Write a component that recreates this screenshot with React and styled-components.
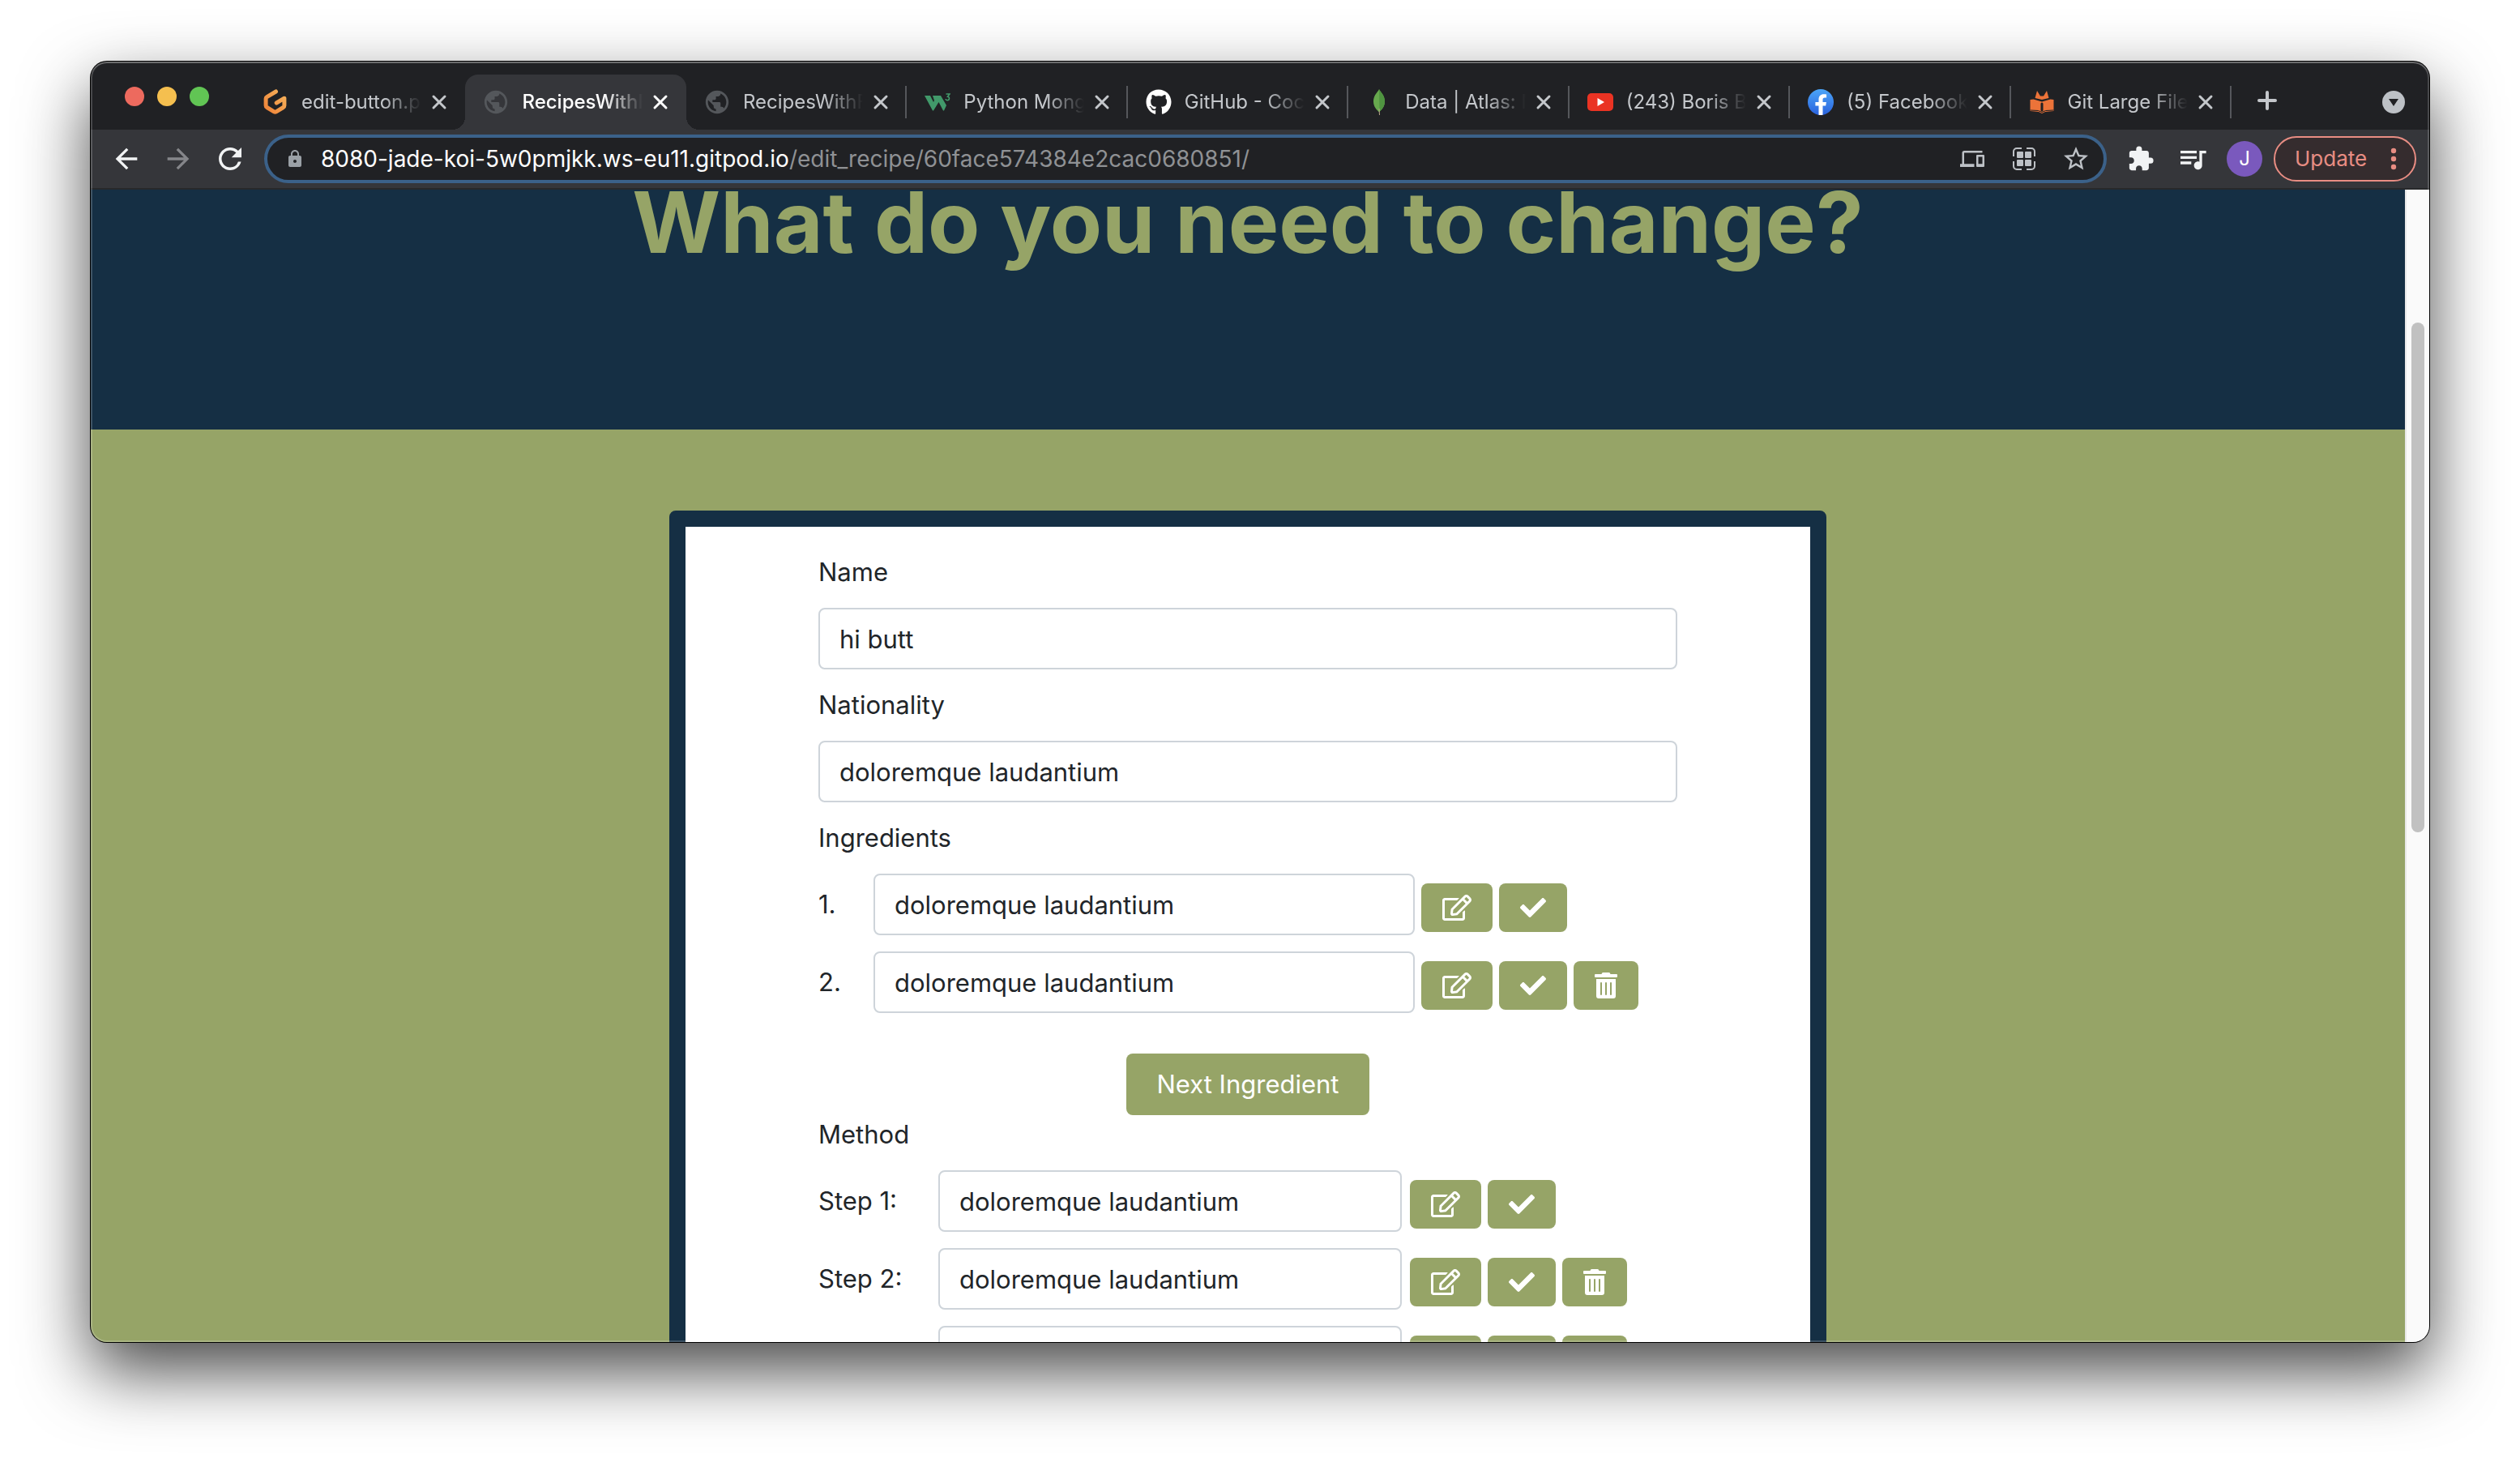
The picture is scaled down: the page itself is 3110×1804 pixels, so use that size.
import React from "react";
import styled, { createGlobalStyle, css } from "styled-components";
import { FaCheck, FaGithub, FaRegEdit, FaTrashAlt } from "react-icons/fa";
import {
  MdArrowBack,
  MdArrowForward,
  MdDevices,
  MdExtension,
  MdLock,
  MdPublic,
  MdQueueMusic,
  MdRefresh,
  MdStarBorder,
} from "react-icons/md";

const navy = "#152f44";
const olive = "#96a467";
const frame = "#202124";
const toolbar = "#35363a";

const GlobalStyle = createGlobalStyle`
  *, *::before, *::after { box-sizing: border-box; }
  body {
    margin: 0;
    background: #fff;
    font-family: Inter, "Liberation Sans", sans-serif;
    font-size: 31px;
    line-height: 48px;
    color: #212529;
  }
  button, input { font: inherit; }
  button { cursor: pointer; }
  svg { display: block; flex: none; }
`;

const Desktop = styled.div`
  height: 100vh;
  padding: 76px 112px 148px;
  display: flex;
`;

const Window = styled.div`
  position: relative;
  flex: 1;
  min-width: 0;
  display: flex;
  flex-direction: column;
  overflow: hidden;
  border-radius: 20px;
  background: ${frame};
  box-shadow: 0 0 0 1px #000, 0 36px 84px rgba(0, 0, 0, 0.72);

  &::after {
    content: "";
    position: absolute;
    inset: 0;
    border-radius: 20px;
    box-shadow: inset 0 0 0 2px rgba(255, 255, 255, 0.18),
      inset 0 2px 0 rgba(255, 255, 255, 0.2);
    pointer-events: none;
  }
`;

/* ---------- tab strip ---------- */

const TabStrip = styled.header`
  height: 84px;
  padding: 16px 30px 0 42px;
  display: flex;
  align-items: center;
`;

const Lights = styled.div`
  width: 148px;
  height: 54px;
  align-self: flex-start;
  display: flex;
  align-items: center;
  gap: 16px;
`;

const Light = styled.button`
  width: 24px;
  height: 24px;
  padding: 0;
  border: 0;
  border-radius: 50%;
  background: ${(p) => p.$color};
`;

const TabList = styled.div`
  flex: 0 1 2452px;
  min-width: 0;
  height: 100%;
  display: flex;
`;

const Tab = styled.div`
  position: relative;
  flex: 1;
  min-width: 0;
  padding: 0 20px 0 22px;
  display: flex;
  align-items: center;
  color: #c4c7cb;

  ${(p) =>
    p.$divider &&
    css`
      &::after {
        content: "";
        position: absolute;
        right: 0;
        top: 14px;
        width: 2px;
        height: 40px;
        background: #55575b;
      }
    `}

  ${(p) =>
    p.$active &&
    css`
      color: #fff;
      background: ${toolbar};
      border-radius: 16px 16px 0 0;

      &::before,
      &::after {
        content: "";
        position: absolute;
        bottom: 0;
        width: 16px;
        height: 16px;
      }
      &::before {
        right: 100%;
        background: radial-gradient(circle at 0 0, transparent 16px, ${toolbar} 16px);
      }
      &::after {
        left: 100%;
        background: radial-gradient(circle at 100% 0, transparent 16px, ${toolbar} 16px);
      }
    `}
`;

const TabTitle = styled.span`
  flex: 1;
  min-width: 0;
  margin: 0 10px 0 16px;
  overflow: hidden;
  white-space: nowrap;
  font-size: 24px;
  line-height: 32px;
  font-weight: ${(p) => (p.$active ? 500 : 400)};
  mask-image: linear-gradient(90deg, #000 68%, transparent 100%);
`;

const PlainButton = styled.button`
  width: ${(p) => p.$width || 24}px;
  height: ${(p) => p.$height || 24}px;
  padding: 0;
  border: 0;
  background: none;
  color: inherit;
  display: flex;
  flex: none;
  align-items: center;
  justify-content: center;
`;

const StripActions = styled.div`
  flex: 1;
  padding-left: 32px;
  display: flex;
  justify-content: space-between;
  color: #c4c7cb;
`;

/* ---------- toolbar ---------- */

const Toolbar = styled.nav`
  height: 74px;
  padding: 0 16px 0 12px;
  border-bottom: 2px solid #28292b;
  background: ${toolbar};
  color: #f1f3f4;
  display: flex;
  align-items: center;
`;

const Omnibox = styled.div`
  flex: 1;
  min-width: 0;
  height: 60px;
  margin: 0 10px;
  padding: 0 2px 0 22px;
  border: 4px solid #3b6189;
  border-radius: 30px;
  background: ${frame};
  color: #bdc1c6;
  display: flex;
  align-items: center;
`;

const Url = styled.div`
  flex: 1;
  min-width: 0;
  margin-left: 20px;
  overflow: hidden;
  white-space: nowrap;
  font-size: 28px;
  line-height: 40px;
  color: #8f9194;
`;

const Host = styled.span`
  color: #fff;
`;

const Avatar = styled.span`
  width: 44px;
  height: 44px;
  border-radius: 50%;
  background: #7a59bd;
  color: #fff;
  font-size: 24px;
  line-height: 44px;
  text-align: center;
`;

const UpdateButton = styled.button`
  height: 56px;
  width: 176px;
  margin-left: 4px;
  padding: 0 22px 0 24px;
  border: 2px solid #e88d83;
  border-radius: 28px;
  background: #352c2e;
  color: #e88d83;
  font-size: 26px;
  line-height: 32px;
  display: flex;
  align-items: center;
  justify-content: space-between;
`;

/* ---------- page ---------- */

const Viewport = styled.div`
  flex: 1;
  min-height: 0;
  display: flex;
`;

const Page = styled.main`
  flex: 1;
  min-width: 0;
  overflow: hidden;
  background: ${olive};
`;

const Hero = styled.section`
  height: 296px;
  overflow: hidden;
  background: ${navy};
  color: ${olive};
  display: flex;
  align-items: flex-end;
  justify-content: center;
`;

const Title = styled.h1`
  margin: 0 0 190px;
  font-size: 105px;
  line-height: 132px;
  font-weight: 700;
  white-space: nowrap;
`;

const Card = styled.form`
  width: 50%;
  margin: 100px auto;
  padding: 32px 164px;
  border: 20px solid ${navy};
  border-radius: 8px;
  background: #fff;
  display: flex;
  flex-direction: column;
`;

const Field = styled.div`
  margin-bottom: 20px;
  display: flex;
  flex-direction: column;
  gap: 20px;
`;

const Label = styled.label`
  display: block;
`;

const Group = styled.fieldset`
  min-width: 0;
  margin: 0;
  padding: 0;
  border: 0;
  display: flex;
  flex-direction: column;
`;

const Legend = styled.legend`
  padding: 0;
  margin-bottom: 20px;
`;

const Row = styled.div`
  margin-bottom: 20px;
  display: flex;
  align-items: center;
`;

const RowLabel = styled.label`
  flex: none;
  width: ${(p) => p.$width}px;
`;

const TextInput = styled.input`
  flex: 1 1 auto;
  width: 100%;
  min-width: 0;
  height: 76px;
  padding: 12px 24px;
  border: 2px solid #ced4da;
  border-radius: 8px;
  background: #fff;
  color: #212529;
  line-height: 48px;
  outline: none;
`;

const RowActions = styled.div`
  flex: none;
  width: ${(p) => p.$width}px;
  height: 60px;
  padding-left: ${(p) => p.$inset}px;
  margin-top: 8px;
  display: flex;
  gap: 8px;
`;

const SolidButton = styled.button`
  border: 0;
  border-radius: 8px;
  background: ${olive};
  color: #fff;
`;

const IconButton = styled(SolidButton)`
  height: 60px;
  padding: 0 26px;
  display: flex;
  align-items: center;

  svg {
    width: ${(p) => p.$icon}px;
    height: 32px;
  }
`;

const NextButton = styled(SolidButton)`
  width: 300px;
  height: 76px;
  margin-top: 30px;
  padding: 0;
  align-self: center;
`;

const ScrollTrack = styled.div`
  width: 30px;
  padding: 164px 6px 0;
  border-left: 2px solid #e8e8e8;
  background: #fafafa;
`;

const ScrollThumb = styled.div`
  width: 16px;
  height: 50%;
  border-radius: 8px;
  background: #c1c1c1;
`;

/* ---------- drawings ---------- */

const Cross = () => (
  <svg width="20" height="20" viewBox="0 0 20 20" stroke="currentColor" strokeWidth="3" strokeLinecap="round">
    <path d="M3 3l14 14M17 3L3 17" />
  </svg>
);

const Plus = () => (
  <svg width="24" height="24" viewBox="0 0 24 24" stroke="currentColor" strokeWidth="4" strokeLinecap="round">
    <path d="M12 2v20M2 12h20" />
  </svg>
);

const SearchTabs = () => (
  <svg width="28" height="28" viewBox="0 0 28 28">
    <circle cx="14" cy="14" r="14" fill="#bdc1c6" />
    <path d="M8 10h12l-6 9z" fill={frame} />
  </svg>
);

const GitpodLogo = () => (
  <svg width="32" height="32" viewBox="0 0 32 32" fill="none">
    <defs>
      <linearGradient id="gitpod" x1="1" y1="0" x2="0" y2="1">
        <stop offset="0" stopColor="#f6b35c" />
        <stop offset="1" stopColor="#ee8238" />
      </linearGradient>
    </defs>
    <path
      d="M16.500 3L5.400 9.600a2.600 2.600 0 0 0-1.300 2.300v8.400c0 .9.5 1.800 1.300 2.200l8.800 5.300c.8.5 1.800.5 2.600 0l8.800-5.300c.8-.4 1.300-1.300 1.300-2.200V11.200l-9.700 5.800"
      stroke="url(#gitpod)"
      strokeWidth="5"
      strokeLinecap="round"
      strokeLinejoin="round"
    />
  </svg>
);

const W3Logo = () => (
  <svg width="32" height="32" viewBox="0 0 32 32">
    <path d="M0 8h7l4 8 1-2-2-6h10l7 12-3 6.500h-1L17.500 16 11 26.500h-1z" fill="#41996a" />
    <path d="M26.500 6h4.500l-2.500 3.200c2.500.2 3 4.600-.5 4.600-1.300 0-1.900-.7-2-1.800" fill="none" stroke="#41996a" strokeWidth="1.500" />
  </svg>
);

const LeafLogo = () => (
  <svg width="32" height="32" viewBox="0 0 32 32">
    <path d="M16 0c1 3 7 7 7 15 0 7-4 10-6.500 13h-1C13 25 9 22 9 15 9 7 15 3 16 0z" fill="#67a94e" />
    <path d="M16 0c1 3 7 7 7 15 0 7-4 10-6.500 13z" fill="#4f9440" />
    <path d="M15.500 24h1l.5 8h-1z" fill="#b8a68a" />
  </svg>
);

const YoutubeLogo = () => (
  <svg width="32" height="32" viewBox="0 0 32 32">
    <rect y="5" width="32" height="22" rx="5" fill="#ea3323" />
    <path d="M12.500 11v10l8.500-5z" fill="#fff" />
  </svg>
);

const FacebookLogo = () => (
  <svg width="32" height="32" viewBox="0 0 32 32">
    <defs>
      <linearGradient id="facebook" x1="0" y1="0" x2="0" y2="1">
        <stop offset="0" stopColor="#4ba5f8" />
        <stop offset="1" stopColor="#2a62dd" />
      </linearGradient>
    </defs>
    <circle cx="16" cy="16" r="16" fill="url(#facebook)" />
    <path
      d="M13.500 31.800V20.600H9.400V16h4.100v-3.500c0-4 2.400-6.300 6.100-6.300 1.200 0 2.400.2 3.500.4v3.900h-2c-2 0-2.600 1.200-2.600 2.500v3h4.400l-.7 4.600h-3.700v11.200a16 16 0 0 1-5 0z"
      fill="#fff"
    />
  </svg>
);

const GitLfsLogo = () => (
  <svg width="32" height="32" viewBox="0 0 32 32" fill="#ec7339">
    <path d="M10 2l4 6.500h4L22 2l2.500 9-8.500 2-8.500-2z" />
    <path d="M1.500 13l4-.5 10.500 3 10.500-3 4 .5v14l-10.500 1L16 30l-4-2-10.500-1z" />
    <path d="M16 18v8" stroke={frame} strokeWidth="3" strokeLinecap="round" />
    <path d="M1.500 26l10 .5L16 28.500l4.500-2 10-.5" fill="none" stroke={frame} strokeWidth="1" />
  </svg>
);

const Globe = () => <MdPublic size={34} color="#54575b" style={{ margin: -1 }} />;

const QrGrid = () => (
  <svg width="30" height="30" viewBox="0 0 30 30" fill="none" stroke="currentColor" strokeWidth="2">
    <path d="M2 12V6a4 4 0 0 1 4-4h6M18 2h6a4 4 0 0 1 4 4v6M28 18v6a4 4 0 0 1-4 4h-6M12 28H6a4 4 0 0 1-4-4v-6" />
    <g fill="currentColor" stroke="none">
      <rect x="6" y="6" width="8" height="8" rx="1" />
      <rect x="16" y="6" width="8" height="8" rx="1" />
      <rect x="6" y="16" width="8" height="8" rx="1" />
      <rect x="16" y="16" width="8" height="8" rx="1" />
    </g>
  </svg>
);

const Dots = () => (
  <svg width="8" height="28" viewBox="0 0 8 28" fill="currentColor">
    <circle cx="4" cy="4" r="3.200" />
    <circle cx="4" cy="14" r="3.200" />
    <circle cx="4" cy="24" r="3.200" />
  </svg>
);

/* ---------- content ---------- */

const tabs = [
  { title: "edit-button.p", icon: <GitpodLogo /> },
  { title: "RecipesWithF", icon: <Globe />, active: true },
  { title: "RecipesWithF", icon: <Globe />, divider: true },
  { title: "Python Mong", icon: <W3Logo />, divider: true },
  { title: "GitHub - Coc", icon: <FaGithub size={32} color="#fff" />, divider: true },
  { title: "Data | Atlas: M", icon: <LeafLogo />, divider: true },
  { title: "(243) Boris B", icon: <YoutubeLogo />, divider: true },
  { title: "(5) Facebook", icon: <FacebookLogo />, divider: true },
  { title: "Git Large File", icon: <GitLfsLogo />, divider: true },
];

const lights = [
  ["Close window", "#ed6a5e"],
  ["Minimise window", "#f5bf4f"],
  ["Zoom window", "#61c554"],
];

function EntryRow({ id, label, labelWidth, actionsWidth, inset, removable }) {
  return (
    <Row>
      <RowLabel htmlFor={id} $width={labelWidth}>
        {label}
      </RowLabel>
      <TextInput id={id} defaultValue="doloremque laudantium" />
      <RowActions $width={actionsWidth} $inset={inset}>
        <IconButton type="button" aria-label="Edit" $icon={36}>
          <FaRegEdit />
        </IconButton>
        <IconButton type="button" aria-label="Confirm" $icon={32}>
          <FaCheck />
        </IconButton>
        {removable && (
          <IconButton type="button" aria-label="Delete" $icon={28}>
            <FaTrashAlt />
          </IconButton>
        )}
      </RowActions>
    </Row>
  );
}

export default function App() {
  return (
    <>
      <GlobalStyle />
      <Desktop>
        <Window>
          <TabStrip>
            <Lights>
              {lights.map(([name, color]) => (
                <Light key={name} aria-label={name} $color={color} />
              ))}
            </Lights>
            <TabList>
              {tabs.map((tab, i) => (
                <Tab key={i} $active={tab.active} $divider={tab.divider}>
                  {tab.icon}
                  <TabTitle $active={tab.active}>{tab.title}</TabTitle>
                  <PlainButton aria-label="Close tab">
                    <Cross />
                  </PlainButton>
                </Tab>
              ))}
            </TabList>
            <StripActions>
              <PlainButton aria-label="New tab">
                <Plus />
              </PlainButton>
              <PlainButton aria-label="Search tabs" $width={28} $height={28}>
                <SearchTabs />
              </PlainButton>
            </StripActions>
          </TabStrip>

          <Toolbar>
            <PlainButton aria-label="Back" $width={64} $height={60}>
              <MdArrowBack size={40} />
            </PlainButton>
            <PlainButton aria-label="Forward" $width={64} $height={60}>
              <MdArrowForward size={40} color="#85868a" />
            </PlainButton>
            <PlainButton aria-label="Reload" $width={64} $height={60}>
              <MdRefresh size={42} />
            </PlainButton>
            <Omnibox>
              <MdLock size={24} color="#9aa0a6" />
              <Url role="textbox" aria-label="Address" tabIndex={0}>
                <Host>8080-jade-koi-5w0pmjkk.ws-eu11.gitpod.io</Host>
                /edit_recipe/60face574384e2cac0680851/
              </Url>
              <PlainButton aria-label="Send to your devices" $width={64} $height={52}>
                <MdDevices size={30} />
              </PlainButton>
              <PlainButton aria-label="Create QR code" $width={64} $height={52}>
                <QrGrid />
              </PlainButton>
              <PlainButton aria-label="Bookmark this tab" $width={64} $height={52}>
                <MdStarBorder size={36} />
              </PlainButton>
            </Omnibox>
            <PlainButton aria-label="Extensions" $width={64} $height={60}>
              <MdExtension size={34} />
            </PlainButton>
            <PlainButton aria-label="Media controls" $width={64} $height={60}>
              <MdQueueMusic size={40} />
            </PlainButton>
            <PlainButton aria-label="Profile" $width={64} $height={60}>
              <Avatar>J</Avatar>
            </PlainButton>
            <UpdateButton>
              Update
              <Dots />
            </UpdateButton>
          </Toolbar>

          <Viewport>
            <Page>
              <Hero>
                <Title>What do you need to change?</Title>
              </Hero>
              <Card>
                <Field>
                  <Label htmlFor="name">Name</Label>
                  <TextInput id="name" defaultValue="hi butt" />
                </Field>
                <Field>
                  <Label htmlFor="nationality">Nationality</Label>
                  <TextInput id="nationality" defaultValue="doloremque laudantium" />
                </Field>
                <Group>
                  <Legend>Ingredients</Legend>
                  {[1, 2].map((n) => (
                    <EntryRow
                      key={n}
                      id={`ingredient-${n}`}
                      label={`${n}.`}
                      labelWidth={68}
                      actionsWidth={324}
                      inset={8}
                      removable={n > 1}
                    />
                  ))}
                  <NextButton type="button">Next Ingredient</NextButton>
                </Group>
                <Group>
                  <Legend>Method</Legend>
                  {[1, 2, 3].map((n) => (
                    <EntryRow
                      key={n}
                      id={`step-${n}`}
                      label={`Step ${n}:`}
                      labelWidth={148}
                      actionsWidth={340}
                      inset={10}
                      removable={n > 1}
                    />
                  ))}
                </Group>
              </Card>
            </Page>
            <ScrollTrack>
              <ScrollThumb />
            </ScrollTrack>
          </Viewport>
        </Window>
      </Desktop>
    </>
  );
}
